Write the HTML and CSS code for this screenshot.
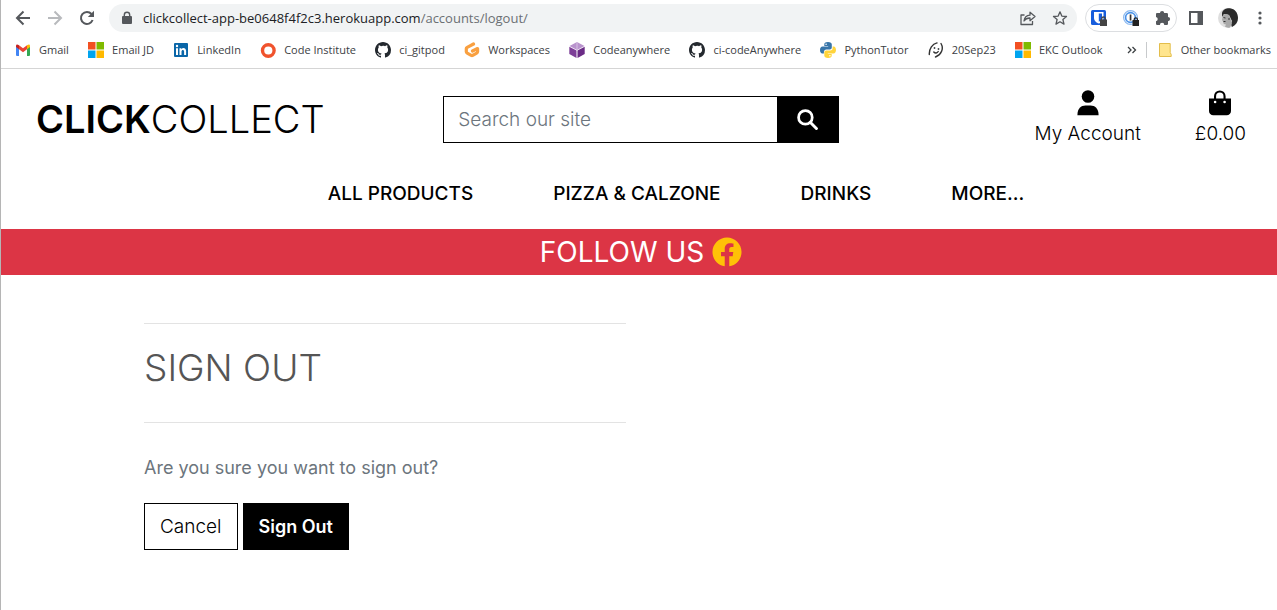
FILE: index.html
```html
<!DOCTYPE html>
<html lang="en">
<head>
<meta charset="utf-8">
<meta name="viewport" content="width=device-width, initial-scale=1">
<title>Sign Out - ClickCollect</title>
<link rel="stylesheet" href="styles.css">
</head>
<body>
<svg class="defs" aria-hidden="true">
  <symbol id="windows" viewBox="0 0 16 16"><path fill="#f25022" d="M0 0h7.500v7.500H0z"/><path fill="#7fba00" d="M8.500 0H16v7.500H8.500z"/><path fill="#00a4ef" d="M0 8.500h7.500V16H0z"/><path fill="#ffb900" d="M8.500 8.500H16V16H8.500z"/></symbol>
  <symbol id="github" viewBox="0 0 16 16"><path fill="#24292f" d="M8 0C3.580 0 0 3.580 0 8c0 3.540 2.290 6.530 5.470 7.590.4.070.55-.17.55-.38 0-.19-.01-.82-.01-1.490-2.010.37-2.530-.49-2.690-.94-.09-.23-.48-.94-.82-1.130-.28-.15-.68-.52-.01-.53.63-.01 1.080.58 1.230.82.72 1.210 1.870.87 2.330.66.07-.52.28-.87.51-1.070-1.780-.2-3.640-.89-3.640-3.950 0-.87.31-1.590.82-2.150-.08-.2-.36-1.020.08-2.120 0 0 .67-.21 2.200.82A7.600 7.600 0 0 1 8 3.860c.68 0 1.360.09 2 .27 1.530-1.040 2.200-.82 2.200-.82.44 1.100.16 1.920.08 2.120.51.56.82 1.270.82 2.150 0 3.070-1.870 3.750-3.650 3.950.29.25.54.73.54 1.480 0 1.070-.01 1.930-.01 2.200 0 .21.15.46.55.38A8 8 0 0 0 16 8c0-4.420-3.580-8-8-8z"/></symbol>
</svg>

<header class="browser">
  <div class="toolbar">
    <div class="nav-buttons">
      <button type="button" class="tool" aria-label="Back"><svg viewBox="0 0 16 16"><path class="line" d="M15 8H2M8.500 1.500L2 8l6.500 6.500"/></svg></button>
      <button type="button" class="tool faded" aria-label="Forward"><svg viewBox="0 0 16 16"><path class="line" d="M1 8h13M7.500 1.500L14 8l-6.500 6.500"/></svg></button>
      <button type="button" class="tool" aria-label="Reload"><svg viewBox="0 0 16 16"><path class="line" d="M13.600 10A6 6 0 1 1 12.500 4"/><path d="M15 .8V7H8.800z"/></svg></button>
    </div>
    <div class="address">
      <svg class="lock" viewBox="0 0 10 14" aria-hidden="true"><path d="M1 5h8a1 1 0 0 1 1 1v6a1 1 0 0 1-1 1H1a1 1 0 0 1-1-1V6a1 1 0 0 1 1-1z"/><path d="M2.300 5.500V4a2.700 2.700 0 0 1 5.400 0v1.500" fill="none" stroke="currentColor" stroke-width="1.400"/></svg>
      <span class="url">clickcollect-app-be0648f4f2c3.herokuapp.com<span class="path">/accounts/logout/</span></span>
      <button type="button" class="tool" aria-label="Share"><svg viewBox="0 0 16 16"><path class="thin" d="M4.500 5H1v9.500h11.500V11M4 11c.5-4 3-5.700 6-5.800V2.200L15 6.500l-5 4.200V8c-2.500-.1-4.500.8-6 3z"/></svg></button>
      <button type="button" class="tool" aria-label="Bookmark this page"><svg viewBox="0 0 16 16"><path class="thin" d="M8 1.800l1.800 4.300 4.700.4-3.600 3 1.100 4.600L8 11.700l-4 2.400 1.100-4.600-3.600-3 4.700-.4z"/></svg></button>
    </div>
    <div class="extensions">
      <button type="button" class="tool" aria-label="Password manager"><svg viewBox="0 0 16 16"><rect width="15" height="15" rx="1.500" fill="#175ddc"/><path d="M3 2h9.500v6c0 3-2.500 4.500-4.700 5.600C5.500 12.500 3 11 3 8z" fill="#fff"/><path d="M7.800 3.500H11V8c0 1.600-1.600 3-3.200 3.800z" fill="#175ddc"/><path d="M9 9.500h7V16H9z" fill="#444"/><path d="M10.700 10V8.800a1.800 1.800 0 0 1 3.600 0V10" fill="none" stroke="#444" stroke-width="1.300"/></svg></button>
      <button type="button" class="tool" aria-label="Vault"><svg viewBox="0 0 16 16"><circle cx="7.500" cy="7.500" r="6.900" fill="#fff" stroke="#8bb8ee" stroke-width="1.200"/><circle cx="7.500" cy="7.500" r="4.900" fill="none" stroke="#4a92e8" stroke-width="1.600"/><path d="M6.700 4.500h1.700v6H6.700z" fill="#333"/><path d="M9.500 10H16v6H9.500z" fill="#222"/><path d="M11.200 10.500V9.400a1.600 1.600 0 0 1 3.200 0v1.100" fill="none" stroke="#222" stroke-width="1.200"/></svg></button>
      <button type="button" class="tool" aria-label="Extensions"><svg viewBox="0 0 16 16"><path d="M2.500 3H5a2.100 2.100 0 1 1 4.200 0h2.600a1.200 1.200 0 0 1 1.200 1.200V7a2.100 2.100 0 1 1 0 4.200v2.600a1.200 1.200 0 0 1-1.200 1.200H9.300a2.200 2.200 0 0 0-4.400 0H2.200A1.200 1.200 0 0 1 1 13.800v-2.600a2.200 2.200 0 0 0 0-4.300V4.200A1.200 1.200 0 0 1 2.500 3z"/></svg></button>
    </div>
    <div class="window-tools">
      <button type="button" class="tool" aria-label="Side panel"><svg viewBox="0 0 16 16"><path d="M1 1h14v14H1zm2 2v10h6.500V3z" fill-rule="evenodd"/></svg></button>
      <button type="button" class="tool avatar" aria-label="Profile"><svg viewBox="0 0 20 20"><circle cx="10" cy="10" r="10" fill="#dedede"/><path d="M4 5C5 1 9 0 12 .3 17 1 20 5 20 10c0 4-2 7-6 9-1-2-1-4 0-6L11 7 6 6 4 9z" fill="#2b2b2b"/><path d="M5 7c3-2 6-1 7 2 1 2 1 5 2 6l-2 4.500c-2 .5-4 0-5-1l1-2c-2 0-3-1-3-3L4 12z" fill="#a9a9a9"/><path d="M5.500 9.500l2 .5M5.500 13.500h2M11 10v2" stroke="#333"/></svg></button>
      <button type="button" class="tool" aria-label="Menu"><svg viewBox="0 0 16 16"><circle cx="8" cy="3" r="1.600"/><circle cx="8" cy="8" r="1.600"/><circle cx="8" cy="13" r="1.600"/></svg></button>
    </div>
  </div>
  <nav class="bookmarks" aria-label="Bookmarks">
    <div class="bookmark-list">
      <a href="#"><svg viewBox="0 0 16 16"><path fill="#4285f4" d="M1 4l3 2.300V14H2a1 1 0 0 1-1-1z"/><path fill="#34a853" d="M12 6.300L15 4v9a1 1 0 0 1-1 1h-2z"/><path fill="#ea4335" d="M4 3.300l4 3 4-3v4l-4 3-4-3z"/><path fill="#c5221f" d="M1 4c0-2 1.500-2 3-.7v4L1 5z"/><path fill="#fbbc04" d="M15 4c0-2-1.500-2-3-.7v4L15 5z"/></svg>Gmail</a>
      <a href="#"><svg><use href="#windows"/></svg>Email JD</a>
      <a href="#"><svg viewBox="0 0 16 16"><rect x="1" y="1" width="14" height="14" rx="1" fill="#0a66a8"/><path fill="#fff" d="M3 6.300h2V13H3zM6.500 6.300h1.900v.9c1.400-1.900 4.700-1.300 4.700 1.900V13h-2V9.500c0-2.200-2.600-2-2.600 0V13h-2z"/><circle cx="4" cy="4" r="1.200" fill="#fff"/></svg>LinkedIn</a>
      <a href="#"><svg viewBox="0 0 16 16"><circle cx="8.300" cy="8.500" r="5.800" fill="none" stroke="#f0532d" stroke-width="3.400"/></svg>Code Institute</a>
      <a href="#"><svg><use href="#github"/></svg>ci_gitpod</a>
      <a href="#"><svg viewBox="0 0 16 16"><path d="M9.500 2L3.200 5.300c-.6.300-.9.700-.9 1.300v3.200c0 .6.300 1 .9 1.300l4 2.300c.6.300 1 .3 1.500 0l4-2.300c.6-.3.900-.7.900-1.300V6.500L8.500 9" fill="none" stroke="#f9a040" stroke-width="3.200" stroke-linejoin="round" stroke-linecap="round"/></svg>Workspaces</a>
      <a href="#"><svg viewBox="0 0 16 16"><path fill="#b993cd" d="M8 0l7.500 4L8 8 .5 4z"/><path fill="#7d3f98" d="M.3 4.800L7.500 8.500V16L.3 12z"/><path fill="#6b2c86" d="M15.700 4.800L8.500 8.500V16l7.200-4z"/><path fill="#d8c2e4" d="M7.500 0h1v8h-1z"/></svg>Codeanywhere</a>
      <a href="#"><svg><use href="#github"/></svg>ci-codeAnywhere</a>
      <a href="#"><svg viewBox="0 0 16 16"><path fill="#3775a9" d="M8 0C5 0 4.300 1.200 4.300 2.500V4H8.200v.6H2.500C1 4.600 0 6 0 8s1 3.600 2.300 3.600h1.600V9.700c0-1.300 1.100-2.300 2.400-2.300h3.500c1.100 0 2-.9 2-2V2.500C11.800 1 10.500 0 8 0z"/><path fill="#ffd43b" d="M8 16c3 0 3.700-1.200 3.700-2.500V12H7.800v-.6h5.700C15 11.400 16 10 16 8s-1-3.600-2.300-3.600h-1.100v1.900c0 1.300-1.100 2.300-2.400 2.300H6.300c-1.100 0-2 .9-2 2v2.900C4.300 15 5.500 16 8 16z"/><circle cx="6.100" cy="2.200" r=".8" fill="#fff"/><circle cx="9.900" cy="13.800" r=".8" fill="#fff"/></svg>PythonTutor</a>
      <a href="#"><svg viewBox="0 0 16 16"><path d="M9 .9C4.500 2 1 6.500 1.300 12.500M13 1.500c3 5 .5 11-5.500 13.500M5.800 10c1.400 1.600 3.400 1.200 4.400-.5" fill="none" stroke="#333" stroke-width="1.400" stroke-linecap="round"/><circle cx="6.500" cy="6" r=".9"/><circle cx="10.500" cy="7" r=".9"/></svg>20Sep23</a>
      <a href="#"><svg><use href="#windows"/></svg>EKC Outlook</a>
    </div>
    <button type="button" class="overflow" aria-label="More bookmarks"><svg viewBox="0 0 10 8"><path d="M1 1l3 3-3 3M5.500 1l3 3-3 3" fill="none" stroke="currentColor" stroke-width="1.300"/></svg></button>
    <a href="#" class="other"><svg viewBox="0 0 16 16"><path d="M2.500 1.500h10.700v9l1 2v2H2.500z" fill="#ffe58e" stroke="#e3bd4b"/></svg>Other bookmarks</a>
  </nav>
</header>

<div class="page">
  <header class="site-header">
    <a href="#" class="logo"><strong>CLICK</strong>COLLECT</a>
    <form class="search" role="search">
      <input type="search" placeholder="Search our site" aria-label="Search our site">
      <button type="button" aria-label="Search"><svg viewBox="0 0 20 20"><circle cx="8" cy="8" r="6.500" fill="none" stroke="currentColor" stroke-width="2.600"/><path d="M12.800 12.800l5.700 5.700" stroke="currentColor" stroke-width="2.800" stroke-linecap="round"/></svg></button>
    </form>
    <div class="account-links">
      <a href="#"><svg viewBox="0 0 24 26"><circle cx="12" cy="6.500" r="6.300"/><path d="M1.400 25.200C1.400 18.500 5 15.500 9.500 15.500h5c4.500 0 8.100 3 8.100 9.700z"/></svg>My Account</a>
      <a href="#"><svg viewBox="0 0 24 26"><path fill-rule="evenodd" d="M1 8.500h5V6.200a5.800 5.800 0 0 1 11.600 0v2.300H23V21a4.300 4.300 0 0 1-4.300 4.300H5.300A4.300 4.300 0 0 1 1 21zm7.100 0h7.400V6.200a3.700 3.700 0 0 0-7.400 0zM7.100 10.700a1.300 1.300 0 1 0 0 2.600 1.300 1.300 0 0 0 0-2.600zm9.500 0a1.300 1.300 0 1 0 0 2.600 1.300 1.300 0 0 0 0-2.600z"/></svg>£0.00</a>
    </div>
  </header>
  <nav class="main-nav" aria-label="Main">
    <a href="#">ALL PRODUCTS</a>
    <a href="#">PIZZA &amp; CALZONE</a>
    <a href="#">DRINKS</a>
    <a href="#">MORE...</a>
  </nav>
  <div class="banner">
    <span>FOLLOW US</span>
    <a href="#" aria-label="Facebook"><svg viewBox="0 0 512 512"><path d="M504 256C504 119 393 8 256 8S8 119 8 256c0 123.780 90.690 226.380 209.250 245V327.690h-63V256h63v-54.640c0-62.150 37-96.480 93.670-96.480 27.140 0 55.520 4.840 55.520 4.840v61h-31.280c-30.800 0-40.410 19.120-40.410 38.730V256h68.780l-11 71.690h-57.780V501C413.310 482.380 504 379.780 504 256z"/></svg></a>
  </div>
  <main class="content">
    <hr>
    <h1>SIGN OUT</h1>
    <hr>
    <p>Are you sure you want to sign out?</p>
    <form class="actions">
      <a href="#" class="btn">Cancel</a>
      <button type="button" class="btn btn-dark">Sign Out</button>
    </form>
  </main>
</div>
</body>
</html>
```

FILE: styles.css
```css
* { box-sizing: border-box; }
body { margin: 0; background: #fff; color: #000; font-family: Inter, "Liberation Sans", sans-serif; font-size: 19px; font-weight: 300; border-left: 1px solid #b5b5b5; min-height: 100vh; }
a { color: inherit; text-decoration: none; }
button, input { font: inherit; border-radius: 0; }
svg { display: block; fill: currentColor; flex: none; }
.defs { position: absolute; width: 0; height: 0; }

/* Browser chrome */
.browser { font-family: "Open Sans", "Noto Sans", sans-serif; font-size: 11px; font-weight: 400; color: #3c4043; border-bottom: 1px solid #d5d5d5; }
.toolbar { display: flex; align-items: center; height: 36px; padding: 4px 9px 4px 14px; }
.tool { padding: 0; border: 0; background: none; color: #55585c; }
.tool svg { width: 16px; height: 16px; }
.line { fill: none; stroke: currentColor; stroke-width: 2; }
.thin { fill: none; stroke: currentColor; stroke-width: 1.3; stroke-linejoin: round; }
.faded { color: #b8babd; }
.nav-buttons { display: flex; gap: 16px; margin-right: 14px; }
.address { display: flex; flex: 1; align-items: center; gap: 16px; height: 28px; padding: 0 9px 0 13px; border-radius: 14px; background: #f1f3f4; }
.lock { width: 10px; height: 14px; margin-right: -5px; color: #55585c; }
.url { flex: 1; font-size: 13px; color: #202124; white-space: nowrap; }
.path { color: #6b6f73; }
.extensions { display: flex; align-items: center; gap: 16px; height: 28px; margin: 0 11px 0 8px; padding: 0 5px; border: 1px solid #dcdee1; border-radius: 14px; }
.window-tools { display: flex; align-items: center; gap: 14px; }
.avatar svg { width: 20px; height: 20px; }
.bookmarks { display: flex; align-items: center; height: 32px; padding: 0 6px 5px 14px; white-space: nowrap; }
.bookmark-list { display: flex; flex: 1; justify-content: space-between; }
.bookmarks a { display: flex; align-items: center; gap: 8px; }
.bookmarks svg { width: 16px; height: 16px; }
.bookmarks .overflow { margin: 0 9px 0 24px; padding: 0; border: 0; background: none; color: inherit; }
.bookmarks .overflow svg { width: 10px; height: 8px; }
.bookmarks .other { padding-left: 10px; border-left: 1px solid #c8cacc; }

/* Shop header */
.site-header { display: grid; grid-template-columns: 1fr 1fr 1fr; align-items: center; padding-top: 21px; }
.logo { padding-left: 35px; font-size: 38px; line-height: 48px; }
.logo strong { font-weight: 600; }
.search { display: flex; margin: 0 13px 0 17px; height: 47px; }
.search input { flex: 1; min-width: 0; padding: 0 14px; border: 1px solid #000; border-right: 0; background: #fff; }
.search input::placeholder { color: #6c757d; opacity: 1; }
.search button { display: grid; place-items: center; width: 62px; border: 0; background: #000; color: #fff; }
.search svg { width: 21px; height: 21px; }
.account-links { display: flex; justify-content: flex-end; gap: 54px; padding-right: 31px; }
.account-links a { display: flex; flex-direction: column; align-items: center; gap: 4px; line-height: 28px; }
.account-links svg { width: 24px; height: 26px; }
.main-nav { display: flex; justify-content: center; gap: 80px; padding: 31px 0 20px 74px; font-weight: 500; line-height: 30px; }
.banner { display: flex; justify-content: center; align-items: center; gap: 8px; height: 46px; padding-left: 4px; background: #dc3545; color: #fff; font-size: 28px; font-weight: 400; }
.banner a { color: #ffc107; }
.banner svg { width: 30px; height: 30px; }

/* Sign out */
.content { width: calc(50% - 156px); min-width: 320px; margin: 48px 0 48px 143px; }
hr { margin: 0; border: 0; border-top: 1px solid #e3e3e3; }
h1 { margin: 20px 0 30px; color: #555; font-size: 37px; font-weight: 300; line-height: 48px; }
.content p { margin: 30px 0 20px; color: #6c757d; font-size: 18px; font-weight: 400; line-height: 30px; }
.actions { display: flex; gap: 5px; }
.btn { padding: 0 15px; border: 1px solid #000; background: #fff; color: #000; line-height: 45px; }
.btn-dark { background: #000; color: #fff; font-size: 18px; font-weight: 600; }
```
